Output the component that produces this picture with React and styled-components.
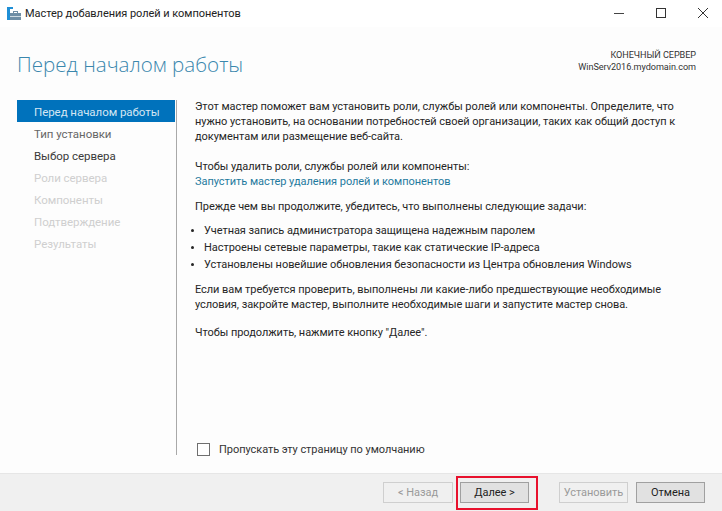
import React from 'react'
import styled, { createGlobalStyle } from 'styled-components'

const GlobalStyle = createGlobalStyle`
    html, body {
        margin: 0;
        padding: 0;
        background: #fff;
    }
    body {
        font-family: Roboto, "Noto Sans", sans-serif;
        font-size: 11px;
        letter-spacing: -0.05px;
        color: #262626;
    }
`

const steps = [
    { label: 'Перед началом работы', state: 'active' },
    { label: 'Тип установки', state: 'done' },
    { label: 'Выбор сервера', state: 'current' },
    { label: 'Роли сервера', state: 'off' },
    { label: 'Компоненты', state: 'off' },
    { label: 'Подтверждение', state: 'off' },
    { label: 'Результаты', state: 'off' },
]

const AppIcon = () => (
    <svg width="14" height="14" viewBox="0 0 14 14">
        <rect x="0" y="0" width="6" height="2" fill="#1f8fd6" />
        <rect x="0" y="2" width="3" height="11" fill="#1f8fd6" />
        <rect x="6.5" y="4.5" width="4" height="2" fill="none" stroke="#6f8ea5" />
        <rect x="3" y="6" width="11" height="7" fill="#6f8ea5" />
        <rect x="3" y="9" width="11" height="1" fill="#cfdbe3" />
    </svg>
)

const App = () => {
    return (
        <Window>
            <GlobalStyle />
            <TitleBar>
                <AppIcon />
                <TitleText>Мастер добавления ролей и компонентов</TitleText>
                <WindowButtons>
                    <svg width="12" height="12" viewBox="0 0 12 12"><path d="M1 6.5 H11" stroke="#444" fill="none" /></svg>
                    <svg width="12" height="12" viewBox="0 0 12 12"><rect x="1.5" y="1.5" width="9" height="9" stroke="#333" fill="none" /></svg>
                    <svg width="12" height="12" viewBox="0 0 12 12"><path d="M1 1 L11 11 M11 1 L1 11" stroke="#333" fill="none" /></svg>
                </WindowButtons>
            </TitleBar>
            <Main>
                <Header>
                    <Heading>Перед началом работы</Heading>
                    <ServerInfo>
                        <div>КОНЕЧНЫЙ СЕРВЕР</div>
                        <div>WinServ2016.mydomain.com</div>
                    </ServerInfo>
                </Header>
                <Columns>
                    <Sidebar>
                        {steps.map(step => (
                            <Step key={step.label} $state={step.state}>{step.label}</Step>
                        ))}
                    </Sidebar>
                    <Content>
                        <Intro>
                            Этот мастер поможет вам установить роли, службы ролей или компоненты. Определите, что<br />
                            нужно установить, на основании потребностей своей организации, таких как общий доступ к<br />
                            документам или размещение веб-сайта.
                        </Intro>
                        <Paragraph>
                            Чтобы удалить роли, службы ролей или компоненты:<br />
                            <RemoveLink>Запустить мастер удаления ролей и компонентов</RemoveLink>
                        </Paragraph>
                        <Paragraph>Прежде чем вы продолжите, убедитесь, что выполнены следующие задачи:</Paragraph>
                        <Tasks>
                            <li>Учетная запись администратора защищена надежным паролем</li>
                            <li>Настроены сетевые параметры, такие как статические IP-адреса</li>
                            <li>Установлены новейшие обновления безопасности из Центра обновления Windows</li>
                        </Tasks>
                        <Intro>
                            Если вам требуется проверить, выполнены ли какие-либо предшествующие необходимые<br />
                            условия, закройте мастер, выполните необходимые шаги и запустите мастер снова.
                        </Intro>
                        <Paragraph>Чтобы продолжить, нажмите кнопку "Далее".</Paragraph>
                        <SkipRow>
                            <CheckBox />
                            Пропускать эту страницу по умолчанию
                        </SkipRow>
                    </Content>
                </Columns>
            </Main>
            <Footer>
                <Button $off $width={70}>&lt; Назад</Button>
                <Highlight>
                    <Button>Далее &gt;</Button>
                </Highlight>
                <Button $off>Установить</Button>
                <Button>Отмена</Button>
            </Footer>
        </Window>
    )
}

const Window = styled.div`
    display: flex;
    flex-direction: column;
    width: 722px;
    height: 511px;
    overflow: hidden;
`

const TitleBar = styled.div`
    display: flex;
    align-items: center;
    height: 27px;
    padding-left: 7px;
    background: #fff;
`

const TitleText = styled.span`
    margin-left: 4px;
    color: #222;
`

const WindowButtons = styled.div`
    display: flex;
    gap: 30px;
    margin-left: auto;
    padding: 0 13px 1px 0;
`

const Main = styled.div`
    display: flex;
    flex-direction: column;
    flex: 1;
    min-height: 0;
    background: #fdfdfd;
`

const Header = styled.div`
    display: flex;
    justify-content: space-between;
    height: 73px;
    padding: 0 26px 0 17px;
`

const Heading = styled.h1`
    margin: 20px 0 0;
    font-family: "Open Sans", "Noto Sans", sans-serif;
    font-size: 20.6px;
    font-weight: 300;
    letter-spacing: 0;
    line-height: 34px;
    color: #3a87ad;
`

const ServerInfo = styled.div`
    padding-top: 22px;
    font-size: 9.1px;
    line-height: 12px;
    text-align: right;
    color: #333;
`

const Columns = styled.div`
    display: flex;
    flex: 1;
    padding: 0 17px 18px;
    min-height: 0;
`

const Sidebar = styled.div`
    display: flex;
    flex-direction: column;
    width: 158px;
    flex-shrink: 0;
`

const stepColors = { active: '#d5e6f3', done: '#666', current: '#3a3a3a', off: '#cfcfcf' }

const Step = styled.div`
    height: 22px;
    padding-left: 17px;
    font-size: 11.5px;
    line-height: 25px;
    white-space: nowrap;
    color: ${props => stepColors[props.$state]};
    background: ${props => props.$state === 'active' ? '#0072bc' : 'transparent'};
`

const Content = styled.div`
    display: flex;
    flex-direction: column;
    flex: 1;
    margin-left: 1px;
    padding-left: 18px;
    border-left: 1px solid #a9a9a9;
    line-height: 15px;
`

const Paragraph = styled.p`
    margin: 0 0 10px;
    white-space: nowrap;
`

const Intro = styled(Paragraph)`
    margin-bottom: 13px;
    &:first-child {
        margin-top: -1px;
        margin-bottom: 15px;
    }
`

const RemoveLink = styled.span`
    color: #1f7a9e;
`

const Tasks = styled.ul`
    display: flex;
    flex-direction: column;
    gap: 2px;
    margin: -1px 0 10px;
    padding-left: 9px;
    white-space: nowrap;
    li::marker {
        font-size: 10px;
    }
`

const SkipRow = styled.label`
    display: flex;
    align-items: center;
    gap: 9px;
    margin: auto 0 -2px 2px;
    color: #333;
`

const CheckBox = styled.span`
    width: 11px;
    height: 11px;
    border: 1px solid #6f6f6f;
    background: #fff;
`

const Footer = styled.div`
    display: flex;
    align-items: center;
    height: 37px;
    padding-left: 383px;
    background: #f0f0f0;
    border-top: 1px solid #e6e6e6;
`

const Button = styled.div`
    display: flex;
    align-items: center;
    justify-content: center;
    box-sizing: border-box;
    width: ${props => props.$width || 69}px;
    height: 21px;
    color: ${props => props.$off ? '#9a9a9a' : '#222'};
    background: ${props => props.$off ? '#f0f0f0' : '#e1e1e1'};
    border: 1px solid ${props => props.$off ? '#cfcfcf' : '#a0a0a0'};
    & + & {
        margin-left: 8px;
    }
`

const Highlight = styled.div`
    display: flex;
    align-items: center;
    box-sizing: border-box;
    width: 82px;
    height: 34px;
    margin: 0 21px 0 3px;
    padding-left: 2px;
    border: 2px solid #e8112d;
`

export default App
